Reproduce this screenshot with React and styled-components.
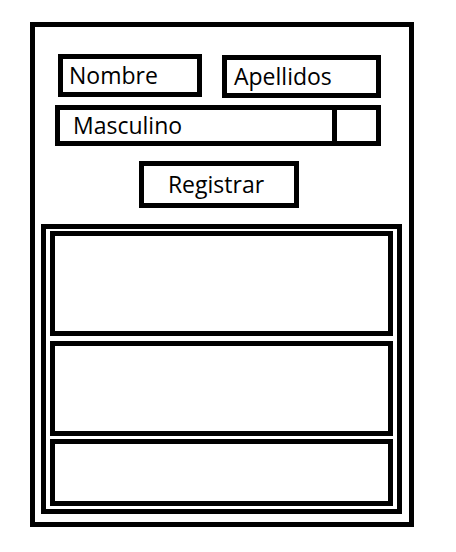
import React from 'react';
import styled, { createGlobalStyle } from 'styled-components';

const GlobalStyle = createGlobalStyle`
  html, body {
    margin: 0;
    padding: 0;
    background: #ffffff;
  }
  * {
    box-sizing: border-box;
  }
`;

// --- Layout ---
const Frame = styled.div`
  margin: 22px 0 0 30px;
  width: 384px;
  height: 505px;
  border: 5px solid #000;
  display: flex;
  flex-direction: column;
  font-family: "Open Sans", "Noto Sans", sans-serif;
  color: #000;
`;

const Row = styled.div`
  display: flex;
  align-items: flex-start;
  gap: ${props => props.gap || 0}px;
  margin-left: ${props => props.indent || 0}px;
  margin-top: ${props => props.top || 0}px;
`;

// --- Form parts ---
const Field = styled.div`
  width: ${props => props.w}px;
  height: ${props => props.h}px;
  margin-top: ${props => props.offset || 0}px;
  border: 5px solid #000;
  display: flex;
  align-items: center;
  padding-left: ${props => props.pad || 6}px;
  font-size: 23px;
  line-height: 1;
  white-space: nowrap;
`;

const Select = styled.div`
  width: 326px;
  height: 41px;
  border: 5px solid #000;
  display: flex;
  align-items: stretch;
  font-size: 23px;
  line-height: 1;
`;

const SelectValue = styled.div`
  flex: 1;
  display: flex;
  align-items: center;
  padding-left: 13px;
  border-right: 5px solid #000;
`;

const SelectToggle = styled.div`
  width: 39px;
`;

const Button = styled.button`
  width: 160px;
  height: 47px;
  border: 5px solid #000;
  background: #fff;
  font-family: inherit;
  font-size: 23px;
  line-height: 1;
  color: #000;
  padding: 0 6px 0 0;
  cursor: pointer;
`;

// --- Result list ---
const List = styled.div`
  margin: 16px 0 0 6px;
  width: 361px;
  height: 290px;
  border: 5px solid #000;
  padding: 2px 4px 3px 4px;
  display: flex;
  flex-direction: column;
`;

const Item = styled.div`
  height: ${props => props.h}px;
  margin-top: ${props => props.gap || 0}px;
  border: 5px solid #000;
`;

export default function App() {
  return (
    <>
      <GlobalStyle />
      <Frame>
        <Row indent={23} top={27} gap={20}>
          <Field w={144} h={43} pad={6}>Nombre</Field>
          <Field w={159} h={43} offset={1} pad={7}>Apellidos</Field>
        </Row>
        <Row indent={20} top={7}>
          <Select>
            <SelectValue>Masculino</SelectValue>
            <SelectToggle />
          </Select>
        </Row>
        <Row indent={104} top={15}>
          <Button>Registrar</Button>
        </Row>
        <List>
          <Item h={105} />
          <Item h={95} gap={5} />
          <Item h={67} gap={3} />
        </List>
      </Frame>
    </>
  );
}
